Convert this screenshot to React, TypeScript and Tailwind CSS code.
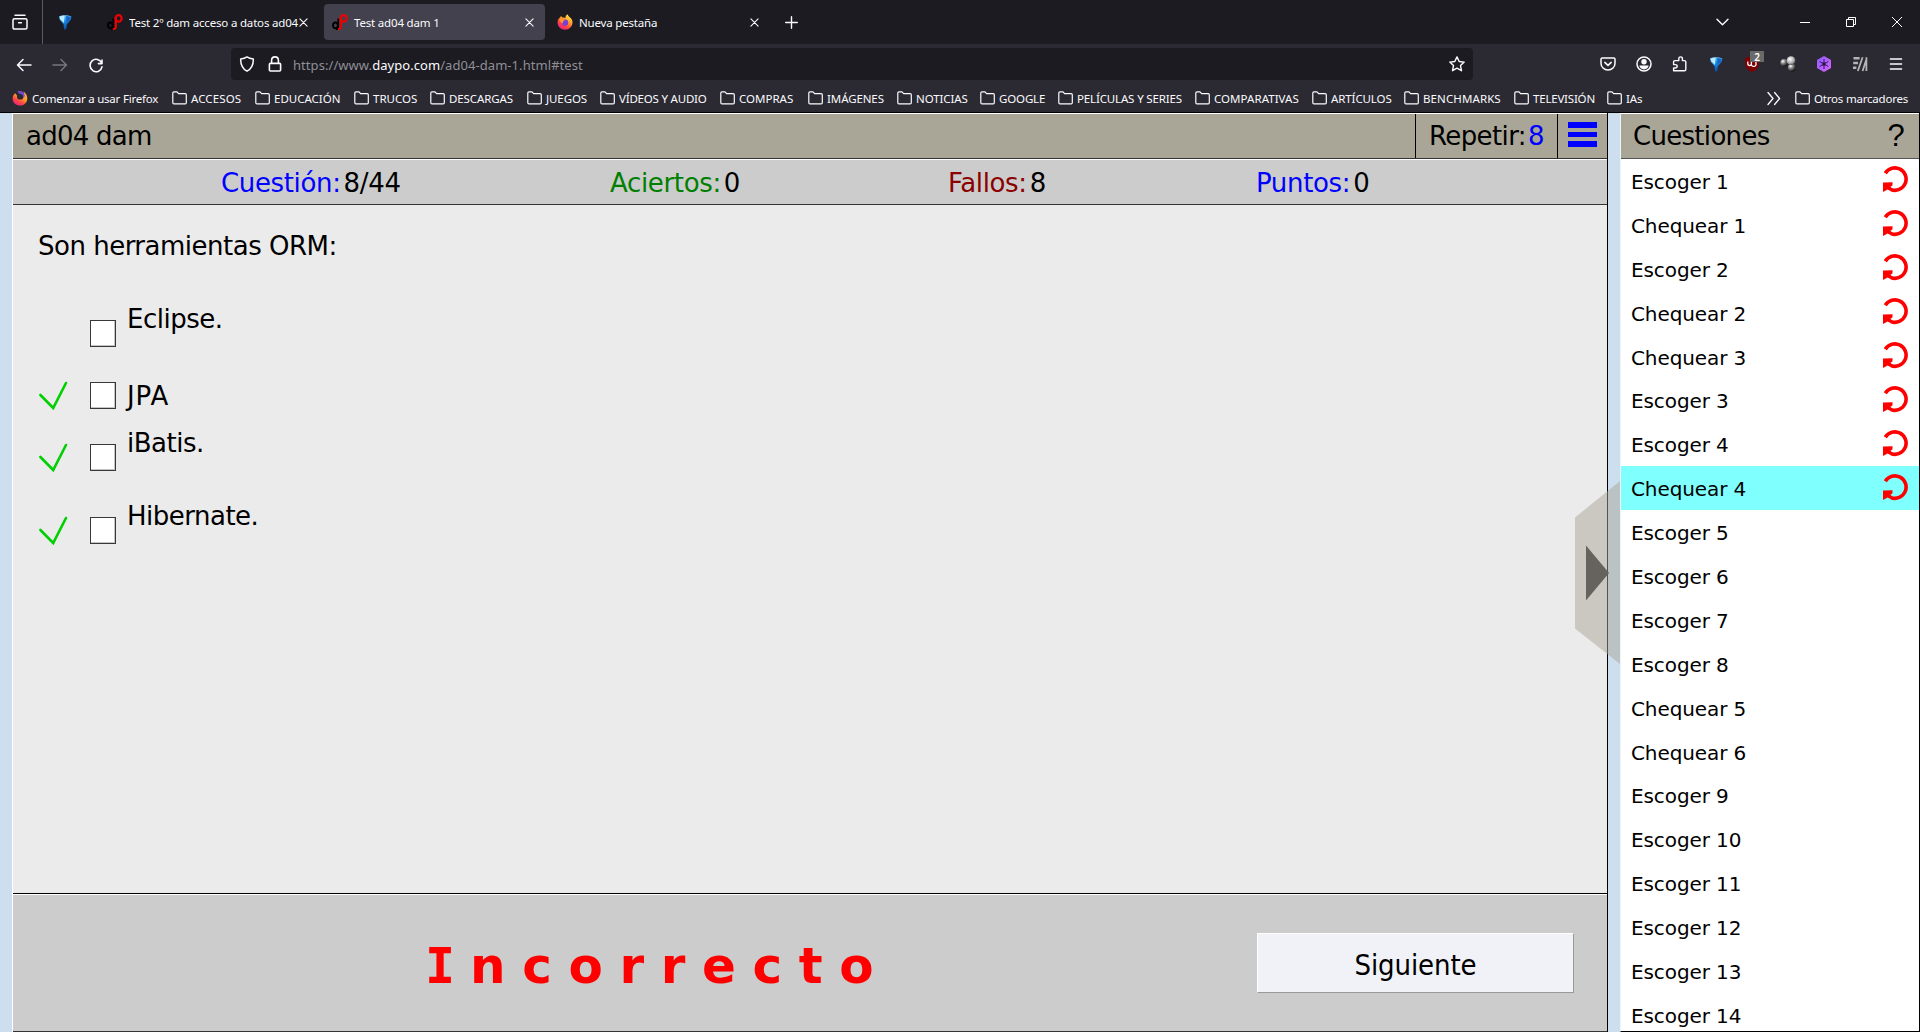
import type { ReactNode } from "react";

const APP_FONT = "font-['DejaVu_Sans',sans-serif]";
const CHROME_FONT = "font-['Noto_Sans',sans-serif]";

const BOOKMARKS: { label: string; slot: string; tracking: string }[] = [
  { label: "ACCESOS", slot: "w-[83px]", tracking: "tracking-[0.1px]" },
  { label: "EDUCACIÓN", slot: "w-[99px]", tracking: "tracking-[0px]" },
  { label: "TRUCOS", slot: "w-[76px]", tracking: "tracking-[0px]" },
  { label: "DESCARGAS", slot: "w-[97px]", tracking: "tracking-[-0.1px]" },
  { label: "JUEGOS", slot: "w-[73px]", tracking: "tracking-[-0.1px]" },
  { label: "VÍDEOS Y AUDIO", slot: "w-[120px]", tracking: "tracking-[-0.2px]" },
  { label: "COMPRAS", slot: "w-[88px]", tracking: "tracking-[0px]" },
  { label: "IMÁGENES", slot: "w-[89px]", tracking: "tracking-[-0.1px]" },
  { label: "NOTICIAS", slot: "w-[83px]", tracking: "tracking-[-0.1px]" },
  { label: "GOOGLE", slot: "w-[78px]", tracking: "tracking-[-0.15px]" },
  { label: "PELÍCULAS Y SERIES", slot: "w-[137px]", tracking: "tracking-[-0.15px]" },
  { label: "COMPARATIVAS", slot: "w-[117px]", tracking: "tracking-[0.05px]" },
  { label: "ARTÍCULOS", slot: "w-[92px]", tracking: "tracking-[-0.1px]" },
  { label: "BENCHMARKS", slot: "w-[110px]", tracking: "tracking-[0.1px]" },
  { label: "TELEVISIÓN", slot: "w-[93px]", tracking: "tracking-[-0.2px]" },
  { label: "IAs", slot: "w-[160px]", tracking: "tracking-[-0.1px]" },
];

const QUESTIONS = [
  { name: "Escoger 1", failed: true },
  { name: "Chequear 1", failed: true },
  { name: "Escoger 2", failed: true },
  { name: "Chequear 2", failed: true },
  { name: "Chequear 3", failed: true },
  { name: "Escoger 3", failed: true },
  { name: "Escoger 4", failed: true },
  { name: "Chequear 4", failed: true, current: true },
  { name: "Escoger 5" },
  { name: "Escoger 6" },
  { name: "Escoger 7" },
  { name: "Escoger 8" },
  { name: "Chequear 5" },
  { name: "Chequear 6" },
  { name: "Escoger 9" },
  { name: "Escoger 10" },
  { name: "Escoger 11" },
  { name: "Escoger 12" },
  { name: "Escoger 13" },
  { name: "Escoger 14" },
];

function Line({ d, size = 16, width = 1.4, className = "" }: { d: string; size?: number; width?: number; className?: string }) {
  return (
    <svg width={size} height={size} viewBox={`0 0 ${size} ${size}`} className={`shrink-0 ${className}`} fill="none" stroke="currentColor" strokeWidth={width} strokeLinecap="round" strokeLinejoin="round">
      <path d={d} />
    </svg>
  );
}

function Gem() {
  return (
    <svg width="16" height="16" viewBox="0 0 16 16" className="shrink-0">
      <defs>
        <linearGradient id="gem" x1="0" y1="0" x2="0.3" y2="1">
          <stop offset="0" stopColor="#8fdcff" />
          <stop offset="0.45" stopColor="#1e8fe6" />
          <stop offset="1" stopColor="#0a4fae" />
        </linearGradient>
      </defs>
      <path d="M2 2.5C5 .8 11 .8 14.4 2.5L13.8 5.6 9.8 10.5 9.4 14.6 8 16 7 14.5 6.6 10.5L2.8 5.8Z" fill="url(#gem)" />
      <path d="M2.6 2.8C4 2 6 1.8 7.5 1.8L7 9 3.4 5.6Z" fill="#b9ecff" />
      <path d="M9 2L13.6 2.9 13 5.6 9.6 9Z" fill="#1565c8" />
    </svg>
  );
}

function DaypoLogo() {
  return (
    <svg width="16" height="16" viewBox="0 0 16 16" className="shrink-0" fill="none">
      <ellipse cx="3.4" cy="11.4" rx="2.4" ry="2.9" stroke="#000" strokeWidth="1.9" />
      <path d="M6.3 4.6V13.6C6.3 15 5.4 15.4 4 15" stroke="#000" strokeWidth="1.7" />
      <ellipse cx="11.6" cy="4.4" rx="3" ry="3.3" stroke="#f00000" strokeWidth="2.2" />
      <path d="M8.8 3V12.4C8.8 14.4 7.8 15.2 6 15" stroke="#f00000" strokeWidth="2.2" />
    </svg>
  );
}

function FirefoxLogo({ dark = false }: { dark?: boolean }) {
  const id = dark ? "ffd" : "ffl";
  return (
    <svg width="16" height="16" viewBox="0 0 16 16" className="shrink-0">
      <defs>
        <linearGradient id={id} x1="0.85" y1="0.05" x2="0.25" y2="1">
          <stop offset="0" stopColor={dark ? "#ffb04a" : "#fff04a"} />
          <stop offset="0.4" stopColor="#ff9a28" />
          <stop offset="0.7" stopColor="#ff4244" />
          <stop offset="1" stopColor="#e0218a" />
        </linearGradient>
      </defs>
      <path
        d={dark ? "M3.2 3.2C1.4 4.6.4 6.6.6 9 .9 12.8 4 15.6 7.8 15.6 12 15.6 15.3 12.4 15.3 8.4 15.3 6 14 3.2 11.4 1.6 12.6 4 12.2 5.4 11.6 6.6L5 5.6Z" : "M3 3.6C1.2 4.8.4 7 .6 9.2 1 12.8 4 15.7 7.9 15.7 12.2 15.7 15.5 12.3 15.5 8.2 15.5 6 14.4 4.2 13 3.4 12 2.6 11 1.6 10.6.2 9 1 8.4 2.4 8.6 3.8L5.6 3.6 4 2Z"}
        fill={`url(#${id})`}
      />
      {dark ? (
        <>
          <circle cx="8.2" cy="6.4" r="3.2" fill="#2b2a33" />
          <path d="M5.6 1.4C9.4.2 12.6 2.4 12.8 6L11.4 8.4C11.8 5.4 10 3.6 7 3.4Z" fill="#7a49d6" />
        </>
      ) : (
        <>
          <circle cx="8.1" cy="8.7" r="3.1" fill="#7b3fd6" />
          <path d="M2.6 5.2C4.6 4.4 6.6 5 7.8 6.4 6 6.6 5.6 8 6 9.4 4 8.8 3 7 2.6 5.2Z" fill="#ff9a28" />
        </>
      )}
    </svg>
  );
}

function Folder() {
  return <Line d="M.8 11.8V2C.8 1.3 1.3.8 2 .8H5L6.6 2.6H13.2C13.9 2.6 14.3 3.1 14.3 3.7V11.8C14.3 12.5 13.9 12.9 13.2 12.9H2C1.3 12.9.8 12.5.8 11.8Z" size={15} width={1.2} />;
}

function CloseX() {
  return <Line d="M.9.9L8.1 8.1M8.1.9L.9 8.1" size={9} width={1.1} />;
}

function ToolCell({ children }: { children: ReactNode }) {
  return <div className="relative flex w-9 items-center justify-center">{children}</div>;
}

function TabBar() {
  return (
    <div className="flex h-11 items-center bg-[#1c1b22] text-[11.5px] tracking-[-0.18px] text-[#fbfbfe]">
      <div className="flex h-full w-[43px] items-center border-r border-[#5b5a63] pl-3">
        <Line d="M1 6.2C1 5.3 1.5 4.7 2.4 4.7H13.6C14.5 4.7 15 5.3 15 6.2V13.6C15 14.5 14.4 15.1 13.5 15.1H2.5C1.6 15.1 1 14.5 1 13.6ZM3 1.3H13M6.6 8.8H9.4" width={1.5} />
      </div>
      <div className="flex w-16 pl-[14px]">
        <Gem />
      </div>
      <div className="flex w-[217px] items-center">
        <DaypoLogo />
        <span className="ml-[6px] w-[170px] overflow-hidden whitespace-nowrap pt-px">Test 2º dam acceso a datos ad04</span>
        <CloseX />
      </div>
      <div className="flex h-9 w-[221px] items-center rounded bg-[#42414d] pl-2">
        <DaypoLogo />
        <span className="ml-[6px] w-[171px] whitespace-nowrap pt-px">Test ad04 dam 1</span>
        <CloseX />
      </div>
      <div className="flex w-[240px] items-center pl-3">
        <FirefoxLogo />
        <span className="ml-[6px] w-[171px] whitespace-nowrap pt-px">Nueva pestaña</span>
        <CloseX />
      </div>
      <Line d="M6.5.7V12.3M.7 6.5H12.3" size={13} width={1.4} className="mt-px" />
      <div className="ml-auto flex items-center">
        <Line d="M1 1.2L6.5 6.8 12 1.2" size={13} width={1.4} className="mr-[71px] mt-[5px]" />
        <span className="mr-9 h-px w-[10px] bg-white" />
        <svg width="10" height="10" viewBox="0 0 10 10" className="mr-9" fill="none" stroke="#fff">
          <path d="M.5 2.5H7.5V9.5H.5ZM2.5 2.5V.5H9.5V7.5H7.5" />
        </svg>
        <svg width="10" height="10" viewBox="0 0 10 10" className="mr-[18px]" fill="none" stroke="#fff">
          <path d="M0 0L10 10M10 0L0 10" />
        </svg>
      </div>
    </div>
  );
}

function NavBar() {
  return (
    <div className="flex h-10 items-center text-[#fbfbfe]">
      <div className="flex w-[231px] items-center pl-[16px]">
        <Line d="M15 8H1.5M7 2.5L1.5 8 7 13.5" width={1.5} className="mt-px" />
        <Line d="M1 8H14.5M9 2.5L14.5 8 9 13.5" width={1.5} className="ml-[20px] mt-px text-[#76757d]" />
        <Line d="M14 3V6.6H10.4M13.6 6A6 6.2 0 1 0 14 9.8" width={1.6} className="ml-[20px] mt-px" />
      </div>
      <div className="flex h-8 w-[1242px] items-center rounded bg-[#1c1b22]">
        <Line d="M8 .9C6.4 2 4 2.7 1.7 2.9 1.5 8.5 3.4 12.6 8 15.2 12.6 12.6 14.5 8.5 14.3 2.9 12 2.7 9.6 2 8 .9Z" width={1.5} className="ml-2" />
        <Line d="M3.4 7.4H12.6C13.2 7.4 13.6 7.8 13.6 8.4V14C13.6 14.6 13.2 15 12.6 15H3.4C2.8 15 2.4 14.6 2.4 14V8.4C2.4 7.8 2.8 7.4 3.4 7.4ZM4.6 7.2V4.4C4.6 2.2 6 .9 8 .9S11.4 2.2 11.4 4.4V7.2" width={1.6} className="ml-3" />
        <span className="ml-[10px] whitespace-nowrap pt-[3px] text-[13px] tracking-[0.06px] text-[#8f8f96]">
          https://www.<span className="text-[#fbfbfe]">daypo.com</span>/ad04-dam-1.html#test
        </span>
        <Line d="M8 .9L10.2 5.5 15.2 6.1 11.5 9.6 12.5 14.7 8 12.2 3.5 14.7 4.5 9.6.8 6.1 5.8 5.5Z" width={1.4} className="ml-auto mr-2" />
      </div>
      <div className="ml-auto mr-[6px] flex items-center">
        <ToolCell>
          <Line d="M2.2 2H13.8C14.6 2 15 2.4 15 3.2V7.2C15 11 12 14 8 14S1 11 1 7.2V3.2C1 2.4 1.4 2 2.2 2ZM4.8 6.4L8 9.4 11.2 6.4" width={1.5} />
        </ToolCell>
        <ToolCell>
          <svg width="16" height="16" viewBox="0 0 16 16">
            <circle cx="8" cy="8" r="7" fill="none" stroke="currentColor" strokeWidth="1.5" />
            <circle cx="8" cy="5.8" r="2.7" fill="currentColor" />
            <path d="M3.3 9.6H12.7C12 12.2 10.3 13.4 8 13.4S4 12.2 3.3 9.6Z" fill="currentColor" />
          </svg>
        </ToolCell>
        <ToolCell>
          <Line d="M1.6 8.6H3C4.4 8.6 5.2 9.4 5.2 10.3S4.4 12 3 12H1.6V14.8H12.4C13.4 14.8 13.8 14.2 13.8 13.4V5.8C13.8 5 13.4 4.6 12.4 4.6H10.4V2.6C10.4 1.6 9.6.9 8.6.9S6.8 1.6 6.8 2.6V4.6H2.8C2 4.6 1.6 5 1.6 5.8Z" width={1.4} />
        </ToolCell>
        <ToolCell>
          <Gem />
        </ToolCell>
        <ToolCell>
          <svg width="16" height="16" viewBox="0 0 16 16">
            <path d="M8 0L14.8 2.2V7C14.8 11.5 12 14.4 8 16 4 14.4 1.2 11.5 1.2 7V2.2Z" fill="#800000" />
            <path d="M3.8 5.4V7.6C3.8 10.4 7.4 10.4 7.4 7.6V5.4M7.4 7.6A2.4 2.2 0 1 0 12 7.6 2.4 2.2 0 1 0 7.4 7.6" fill="none" stroke="#fff" strokeWidth="1.3" />
          </svg>
          <span className="absolute -top-[5px] left-4 flex h-[11px] w-[14px] items-center justify-center bg-[#6a6a6a] text-[10px] font-semibold leading-none text-white">2</span>
        </ToolCell>
        <ToolCell>
          <svg width="16" height="16" viewBox="0 0 16 16">
            <defs>
              <radialGradient id="ball" cx="0.35" cy="0.3" r="0.75">
                <stop offset="0" stopColor="#fff" />
                <stop offset="0.4" stopColor="#8c8c8c" />
                <stop offset="1" stopColor="#0c0c0c" />
              </radialGradient>
              <radialGradient id="ballLight" cx="0.4" cy="0.35" r="0.7">
                <stop offset="0" stopColor="#fff" />
                <stop offset="0.6" stopColor="#b0b0b0" />
                <stop offset="1" stopColor="#444" />
              </radialGradient>
            </defs>
            <circle cx="4" cy="6.8" r="3.7" fill="url(#ball)" />
            <circle cx="11.8" cy="11.6" r="3.9" fill="url(#ball)" />
            <circle cx="11" cy="4.6" r="4.4" fill="url(#ballLight)" />
          </svg>
        </ToolCell>
        <ToolCell>
          <svg width="16" height="16" viewBox="0 0 16 16">
            <defs>
              <linearGradient id="hex" x1="0" y1="0" x2="1" y2="1">
                <stop offset="0" stopColor="#8a5cff" />
                <stop offset="1" stopColor="#dc64ff" />
              </linearGradient>
            </defs>
            <path d="M8 0L15 4V12L8 16 1 12V4Z" fill="url(#hex)" />
            <path d="M8 3V13M3.7 5.5L12.3 10.5M12.3 5.5L3.7 10.5" stroke="#2a1650" strokeWidth="1" />
            <circle cx="8" cy="8" r="1.8" fill="#2a1650" />
          </svg>
        </ToolCell>
        <ToolCell>
          <svg width="16" height="16" viewBox="0 0 16 16" fill="none" stroke="#b4b4b6">
            <path d="M1.5 2.2H7.6M1.2 7H6M1 11.8H4.4" strokeWidth="2.4" />
            <path d="M10.6 1.2L5.8 15M14.4 1.2V15M14 4.4L10.6 15" strokeWidth="1.8" />
          </svg>
        </ToolCell>
        <ToolCell>
          <Line d="M2.4 3H13.6M2.4 8H13.6M2.4 13H13.6" width={1.4} />
        </ToolCell>
      </div>
    </div>
  );
}

function BookmarksBar() {
  return (
    <div className="flex h-7 items-center pl-[12px] text-[11.5px] text-[#fbfbfe]">
      <div className="flex w-[160px] shrink-0 items-center gap-1 whitespace-nowrap tracking-[-0.22px]">
        <FirefoxLogo dark />
        <span className="pt-px">Comenzar a usar Firefox</span>
      </div>
      {BOOKMARKS.map((b) => (
        <div key={b.label} className={`flex shrink-0 items-center gap-1 whitespace-nowrap ${b.slot} ${b.tracking}`}>
          <Folder />
          <span className="pt-px">{b.label}</span>
        </div>
      ))}
      <Line d="M1 1.5L6 7.5 1 13.5M7.6 1.5L12.6 7.5 7.6 13.5" size={15} width={1.3} />
      <div className="ml-[13px] flex items-center gap-1 whitespace-nowrap tracking-[-0.2px]">
        <Folder />
        <span className="pt-px">Otros marcadores</span>
      </div>
    </div>
  );
}

function Stat({ label, value, color, width }: { label: string; value: string; color: string; width: string }) {
  return (
    <div className={`flex gap-[3px] ${width}`}>
      <span className={color}>{label}</span>
      <span>{value}</span>
    </div>
  );
}

function Answer({ text, correct = false, tall = false, spacing = "" }: { text: string; correct?: boolean; tall?: boolean; spacing?: string }) {
  return (
    <div className={`flex items-center ${spacing}`}>
      <div className="w-[52px]">
        {correct && (
          <svg width="30" height="30" viewBox="0 0 30 30" className="block" fill="none" stroke="#00d000" strokeWidth="2.6" strokeLinecap="round">
            <path d="M2.4 14L15.2 27 28 2" />
          </svg>
        )}
      </div>
      <div className="mb-[2px] h-[27px] w-[26px] border border-[#383838] bg-white shadow-[inset_-1px_-1px_0_#c4c4c4]" />
      <div className={`pl-[11px] leading-[30px] ${tall ? "h-[60px]" : "h-[30px] tracking-[0.9px]"}`}>{text}</div>
    </div>
  );
}

function RetryIcon() {
  return (
    <svg width="28" height="28" viewBox="0 0 28 28" className="mb-[3px] shrink-0">
      <path d="M3.3 8.3A11.2 11.2 0 1 1 9 24.6" fill="none" stroke="#f00" strokeWidth="3.6" />
      <path d="M1 17.6L10.6 17.2 10.4 20.4 8.4 21.8 10.6 23.8 8.4 26 5.6 24.4 1 27Z" fill="#f00" />
    </svg>
  );
}

function QuizPanel() {
  return (
    <main className="flex w-[1596px] flex-col border-l border-r border-l-white border-r-black text-[26px] tracking-[-0.5px]">
      <header className="flex h-[46px] border-y border-b-[#333] border-t-white bg-[#aaa697] leading-[44px]">
        <span className="flex-1 pl-[13px] tracking-[-0.75px]">ad04 dam</span>
        <span className="w-[142px] border-l border-black pl-[13px] tracking-[-0.6px]">
          Repetir:<span className="ml-[2px] text-[#00f]">8</span>
        </span>
        <span className="flex w-[50px] flex-col items-center gap-1 border-l border-black pt-2 pr-px">
          <i className="h-[6px] w-[29px] bg-[#00f]" />
          <i className="h-[5px] w-[29px] bg-[#00f]" />
          <i className="h-[6px] w-[29px] bg-[#00f]" />
        </span>
      </header>
      <div className="flex h-[46px] border-y border-b-[#333] border-t-white bg-[#ccc] pl-[208px] leading-[46px] tracking-[-0.35px]">
        <Stat label="Cuestión:" value="8/44" color="text-[#00f]" width="w-[389px]" />
        <Stat label="Aciertos:" value="0" color="text-[#008000]" width="w-[338px]" />
        <Stat label="Fallos:" value="8" color="text-[#8b0000]" width="w-[308px]" />
        <Stat label="Puntos:" value="0" color="text-[#00f]" width="w-[120px]" />
      </div>
      <section className="flex-1 bg-[#ebebeb] pl-[25px] pt-[26px]">
        <p className="leading-[30px]">Son herramientas ORM:</p>
        <div className="mt-[43px] flex flex-col">
          <Answer text="Eclipse." tall />
          <Answer text="JPA" correct spacing="mt-[17px]" />
          <Answer text="iBatis." correct tall spacing="mt-[17px]" />
          <Answer text="Hibernate." correct tall spacing="mt-[13px]" />
        </div>
      </section>
      <footer className="flex h-[139px] items-start border-y border-b-[#333] border-t-black bg-[#ccc] shadow-[inset_0_1px_0_#fff]">
        <div className="flex w-[1244px] pl-[412px] pt-[42px] text-[50px] font-bold leading-[60px] tracking-[16.6px] text-[#f00]">
          <span className="font-['DejaVu_Sans_Mono',monospace] tracking-[15px]">I</span>
          <span>ncorrecto</span>
        </div>
        <button className="mt-[39px] h-[60px] w-[317px] border border-b-[#999] border-l-white border-r-[#999] border-t-white bg-[#f0f2f7] pt-[5px] font-['DejaVu_Sans_Condensed',sans-serif] text-[29px] tracking-[-0.1px]">Siguiente</button>
      </footer>
    </main>
  );
}

function QuestionList() {
  return (
    <aside className="flex w-[300px] flex-col border-r border-l border-b border-b-black border-l-[#f0f4f8] border-r-black bg-white">
      <header className="flex h-[46px] shrink-0 border-y border-b-[#555] border-t-white bg-[#aaa697] pl-3 text-[26px] leading-[44px] tracking-[-0.7px]">
        <span className="flex-1">Cuestiones</span>
        <span className="mr-[15px] font-['Liberation_Sans',sans-serif] text-[31px]">?</span>
      </header>
      <ul className="text-[20px] tracking-[-0.1px]">
        {QUESTIONS.map((q) => (
          <li key={q.name} className={`flex h-[43.9px] items-center justify-between pl-[10px] pr-[9px] ${q.current ? "bg-[#80ffff]" : ""}`}>
            <span className="pt-[2px]">{q.name}</span>
            {q.failed && <RetryIcon />}
          </li>
        ))}
      </ul>
    </aside>
  );
}

export default function App() {
  return (
    <div className="flex h-[1032px] w-[1920px] flex-col overflow-hidden">
      <div className={`h-[113px] shrink-0 border-b border-black bg-[#2b2a33] ${CHROME_FONT}`}>
        <TabBar />
        <NavBar />
        <BookmarksBar />
      </div>
      <div className={`relative flex min-h-0 flex-1 gap-3 overflow-hidden bg-[#cddeee] pl-3 text-black ${APP_FONT}`}>
        <QuizPanel />
        <QuestionList />
        <svg width="46" height="184" viewBox="0 0 46 184" className="absolute left-[1575px] top-[368px]">
          <path d="M45 0V183L0 147.5V36.5Z" fill="#aaa697" fillOpacity="0.5" />
          <path d="M11 64.5V119.5L34 92Z" fill="#64635e" />
        </svg>
      </div>
    </div>
  );
}
